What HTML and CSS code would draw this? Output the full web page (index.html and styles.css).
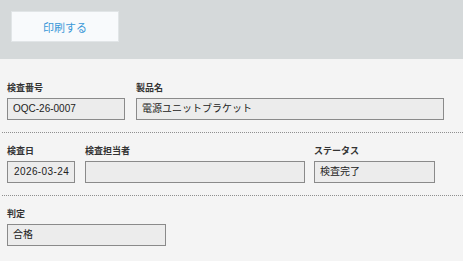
FILE: index.html
```html
<!DOCTYPE html>
<html lang="ja">
<head>
<meta charset="utf-8">
<link rel="stylesheet" href="styles.css">
</head>
<body>
<div class="toolbar">
  <button class="print-btn">印刷する</button>
</div>
<div class="form">
  <div class="row">
    <div class="field w-no">
      <div class="label">検査番号</div>
      <div class="box">OQC-26-0007</div>
    </div>
    <div class="field w-name">
      <div class="label">製品名</div>
      <div class="box">電源ユニットブラケット</div>
    </div>
  </div>
  <div class="row">
    <div class="field w-date">
      <div class="label">検査日</div>
      <div class="box date">2026-03-24</div>
    </div>
    <div class="field w-person">
      <div class="label">検査担当者</div>
      <div class="box"></div>
    </div>
    <div class="field w-status">
      <div class="label">ステータス</div>
      <div class="box">検査完了</div>
    </div>
  </div>
  <div class="row last">
    <div class="field w-judge">
      <div class="label">判定</div>
      <div class="box">合格</div>
    </div>
  </div>
</div>
</body>
</html>
```
FILE: styles.css
```css
html, body {
  margin: 0;
  padding: 0;
  background: #f4f4f4;
  font-family: "Liberation Sans", "Noto Sans CJK JP", sans-serif;
  color: #222;
}
.toolbar {
  background: #d5d9da;
  height: 59px;
  padding: 11px;
  box-sizing: border-box;
}
.print-btn {
  display: block;
  width: 108px;
  height: 31px;
  margin: 0;
  padding: 0;
  background: #f8fafc;
  border: 1px solid #e1e5e7;
  color: #3a98d8;
  font-family: "Noto Sans CJK JP", sans-serif;
  font-size: 11px;
  cursor: pointer;
}
.form {
  padding-top: 11px;
}
.row {
  display: flex;
  margin-left: 2px;
  padding: 12px 0 12px 5px;
  border-bottom: 1px dotted #8f8f8f;
}
.row.last {
  border-bottom: none;
}
.field {
  display: flex;
  flex-direction: column;
}
.label {
  height: 12px;
  line-height: 12px;
  margin-bottom: 4px;
  font-size: 9px;
  font-weight: bold;
  color: #333;
  font-family: "Noto Sans CJK JP", sans-serif;
}
.box {
  height: 22px;
  box-sizing: border-box;
  border: 1px solid #8a8a8a;
  background: #ececec;
  padding: 0 5px;
  font-size: 10px;
  line-height: 20px;
  white-space: nowrap;
  overflow: hidden;
}
.box.date {
  padding-left: 6px;
  letter-spacing: 0.4px;
}
.w-no { width: 118px; margin-right: 11px; }
.w-name { width: 308px; }
.w-date { width: 68px; margin-right: 10px; }
.w-person { width: 220px; margin-right: 9px; }
.w-status { width: 121px; }
.w-judge { width: 159px; }
```
